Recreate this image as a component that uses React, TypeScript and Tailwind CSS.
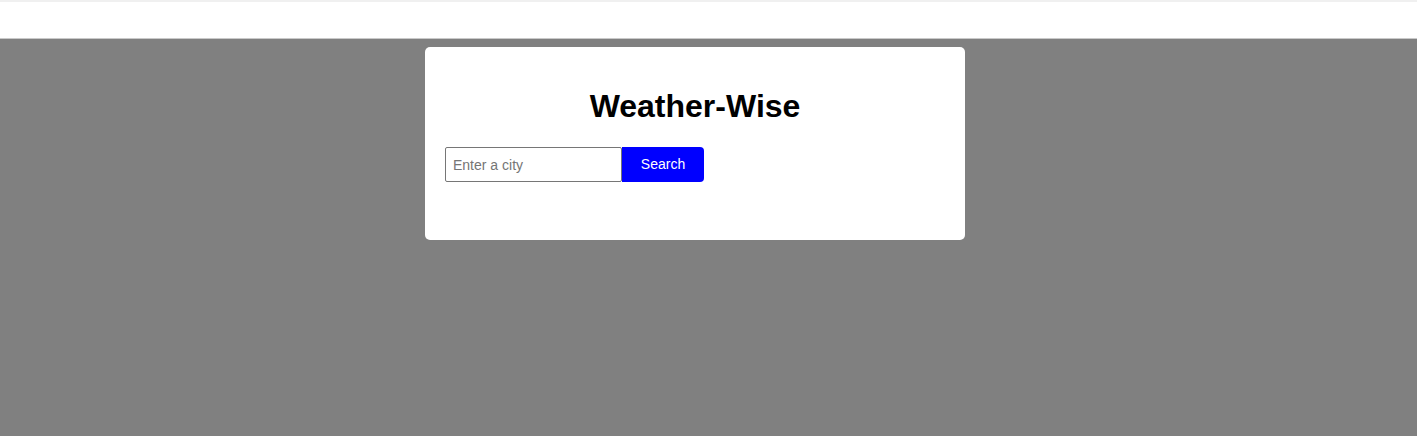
export default function App() {
  return (
    <div className="min-h-[436px] flex flex-col bg-[#808080] font-['Liberation_Sans',Arial,sans-serif]">
      <div className="h-[39px] bg-white border-t-2 border-t-[#f0f0f0] border-b border-b-[#c9c9c9]" />
      <div className="flex justify-center pt-2 pr-[27px]">
        <div className="w-[540px] h-[193px] bg-white rounded-[5px] p-5">
          <h1 className="text-[32px] font-bold text-black text-center leading-[37px] mt-[21px] mb-[22px]">
            Weather-Wise
          </h1>
          <div className="flex">
            <input
              type="text"
              placeholder="Enter a city"
              className="w-[177px] h-[35px] border border-[#767676] px-[7px] text-[14px] text-black placeholder:text-[#757575] outline-none rounded-[2px]"
            />
            <button className="w-[82px] h-[35px] bg-[#0000ff] text-white text-[14px] rounded-r-[4px]">
              Search
            </button>
          </div>
        </div>
      </div>
    </div>
  );
}
